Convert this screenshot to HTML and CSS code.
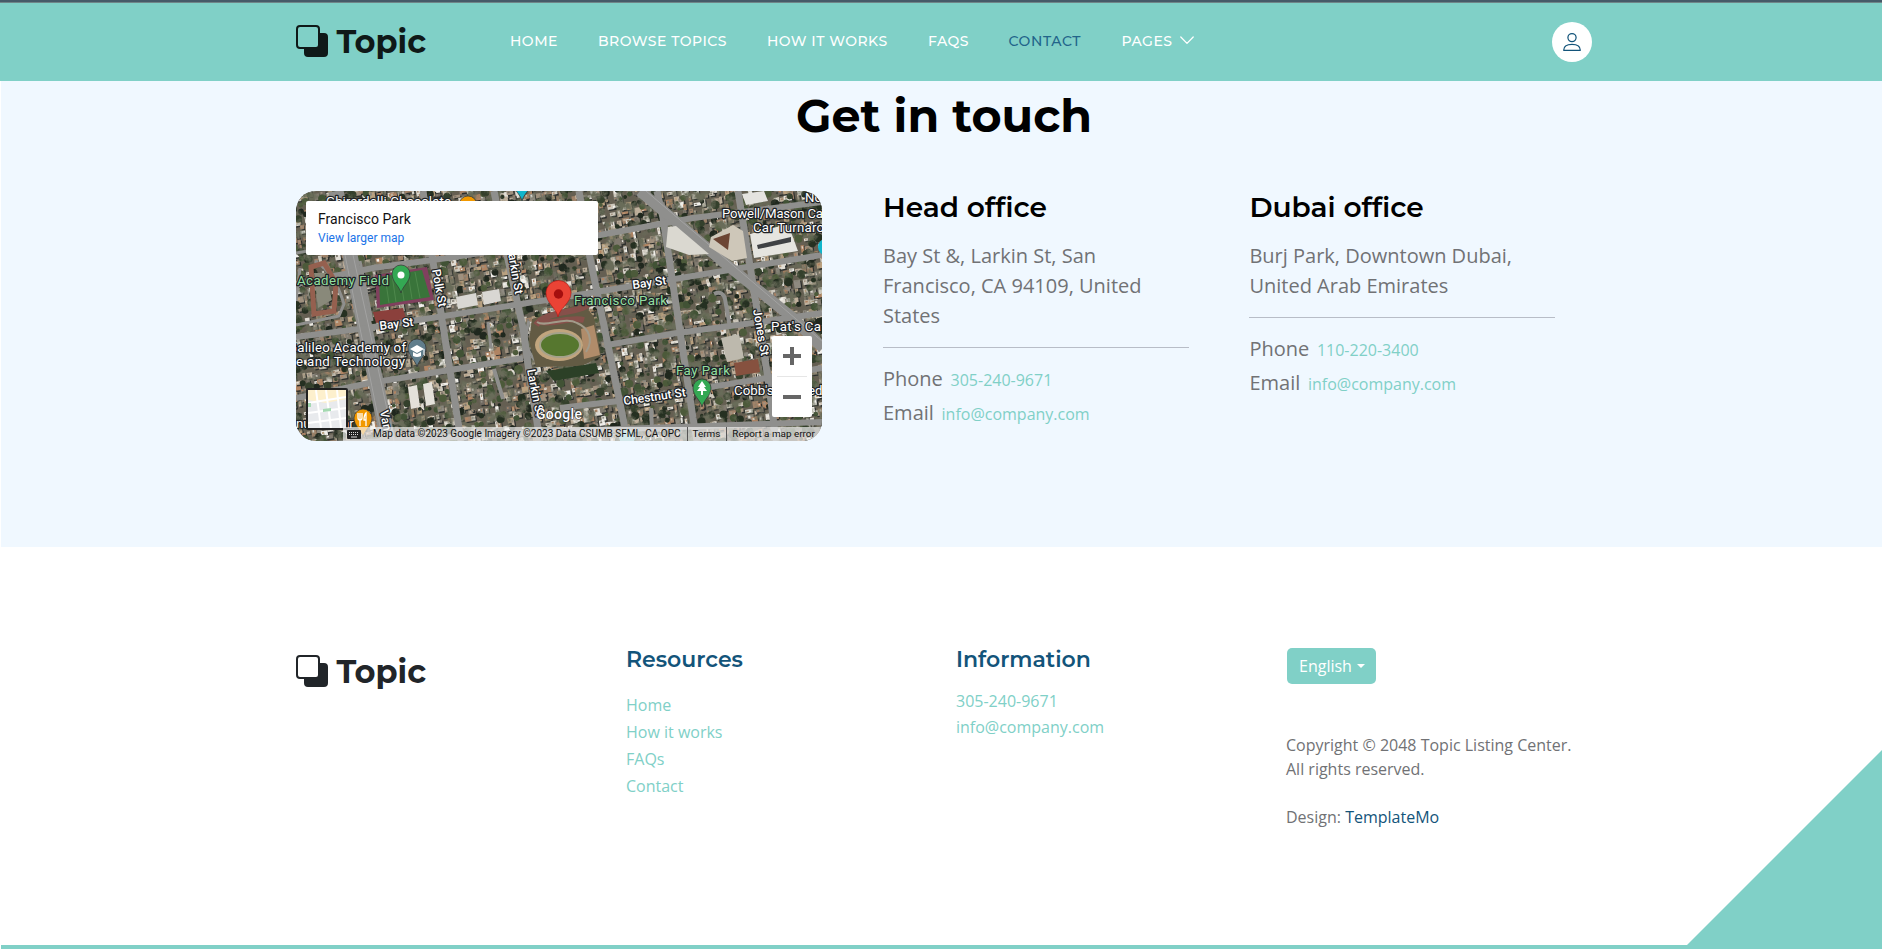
FILE: index.html
```html
<!DOCTYPE html>
<html lang="en">
<head>
<meta charset="utf-8">
<title>Topic Listing Contact Page</title>
<link rel="stylesheet" href="styles.css">
</head>
<body>
<svg width="0" height="0" class="defs">
  <symbol id="back" viewBox="0 0 16 16"><path fill="currentColor" d="M0 2a2 2 0 0 1 2-2h8a2 2 0 0 1 2 2v2h2a2 2 0 0 1 2 2v8a2 2 0 0 1-2 2H6a2 2 0 0 1-2-2v-2H2a2 2 0 0 1-2-2V2zm2-1a1 1 0 0 0-1 1v8a1 1 0 0 0 1 1h8a1 1 0 0 0 1-1V2a1 1 0 0 0-1-1H2z"/></symbol>
</svg>
<header class="navbar">
  <a class="brand"><svg class="brand-icon"><use href="#back"/></svg><span>Topic</span></a>
  <nav class="menu">
    <a class="m-home">Home</a><a class="m-browse">Browse Topics</a><a class="m-how">How it works</a><a class="m-faqs">FAQs</a><a class="m-contact active">Contact</a><a class="m-pages">Pages</a>
    <svg class="chev" viewBox="0 0 14 9"><path d="M.8 1 7 7.4 13.2 1" fill="none" stroke="#fff" stroke-width="1.3" stroke-linecap="round" stroke-linejoin="round"/></svg>
  </nav>
  <a class="user"><svg viewBox="0 0 18 18" fill="none" stroke="#13547a" stroke-width="1.25"><ellipse cx="9" cy="4.6" rx="4.1" ry="4"/><path d="M.7 17.3h16.6c0-3.400-3-5.900-8.300-5.900S.7 13.900.7 17.300z" stroke-linejoin="round"/></svg></a>
</header>
<main class="contact">
  <h2>Get in touch</h2>
  <div class="contact-row">
    <div class="map">
      <svg class="sat" viewBox="0 0 526 250" width="526" height="250">
        <defs>
          <filter id="grain" x="0" y="0" width="100%" height="100%"><feTurbulence type="fractalNoise" baseFrequency=".1" numOctaves="4" seed="8"/><feColorMatrix values="0 0 0 0 .14  0 0 0 0 .15  0 0 0 0 .1  3.4 0 0 0 -1.600"/></filter>
          <g id="pin"><path d="M0 0C-1.500-7-9-11-9-19a9 9 0 0 1 18 0C9-11 1.500-7 0 0z" stroke="#333" stroke-width=".7"/></g>
        </defs>
        <rect width="526" height="250" fill="#655f52"/>
        <g id="blocks"></g>
        <rect width="526" height="250" filter="url(#grain)"/>
        <g fill="none" stroke="#8f8f8d" stroke-width="7" stroke-linejoin="round">
          <path d="M40 0 54 64 92 250" stroke-width="15"/>
          <path d="M127 0 136 64 165 250M198 0 211 64 227 137 232 174 244 250M283 0 294 67 327 227 331 250M361 0 367 27 397 227 401 250M442 0 472 187 480 250"/>
          <path d="M344 0 431 74 497 127 527 157" stroke-width="11"/>
          <path d="M0 146 71 137 264 107 451 76 526 64M0 93 77 77 151 67 304 44 397 27 526 11M311 154 381 142 464 131 526 122M0 207 74 192 227 167M264 217 331 209 471 187 526 177M0 255 264 240 526 231" stroke-width="6"/>
          <path d="M0 62 30 57M19 70C35 80 42 94 48 113L43 125 0 134M4 77 0 110M192 131 195 157M64 70 76 130M233 130C226 153 232 168 250 176" stroke-width="3"/>
          <path d="M418 103c6-3 10 0 11 5l5 29M198 178 207 208M355 217 356 239" stroke-width="4"/>
        </g>
        <g stroke="#aaa" stroke-width=".7"><path d="M49 64 86 245M57 64 98 250M350 0 527 151"/></g>
        <path d="M79 84 131 76 138 109 81 117z" fill="#80405e"/><path d="M83 86 126 79 134 106 84 114z" fill="#39743a"/>
        <path d="m89 85 4 27M96 84l4 27M104 83l4 27M112 82l4 26M119 81l5 26" stroke="#4e884c"/>
        <path d="M77 121 107 117 110 128 80 132z" fill="#8b403c"/>
        <path d="M160 106 180 102 182 114 162 118zM186 101 203 98 205 110 188 114z" fill="#d9d7d3"/>
        <path d="M112 196l9-2 3 22-9 2zM127 193l9-2 3 22-9 2z" fill="#e4e1da"/>
        <path d="M236 128 287 112 298 126 305 165 286 175 240 176 233 150z" fill="#635b44"/>
        <path d="M240 134C250 119 282 123 293 113M241 130c14 5 34-5 47-1" stroke="#86504a" stroke-width="6" fill="none"/>
        <path d="M285 138 298 134 304 164 288 168z" fill="#b08c6a"/>
        <ellipse cx="263" cy="154" rx="24" ry="16" fill="#c1a57e"/><ellipse cx="264" cy="154" rx="20" ry="12" fill="#56772f" stroke="#a4a28b" stroke-width="2"/>
        <path d="M241 131c8 6 28-6 40 1 12 5 17 17 9 29" stroke="#a29b8a" stroke-width="2" fill="none"/>
        <path d="M250 180 300 172 303 182 258 190z" fill="#2c4027"/>
        <path d="M372 36 380 35 413 63 393 64 370 56z" fill="#dad8d0"/><path d="M415 46 437 34 447 40 451 67 436 70 413 56z" fill="#cec7b9"/><path d="m417 48 17-6-2 17z" fill="#6c4534"/>
        <path d="M454 43 492 33 502 60 458 67z" fill="#e5e4df"/><path d="M461 54 495 46v5l-33 7z" fill="#3f4144"/>
        <path d="M446 3l22-3 4 10-22 4z" fill="#e4e3df"/>
        <path d="M425 147l18-4 5 24-17 4z" fill="#bdb9ad"/><path d="M438 172l24-4 2 13-24 4z" fill="#86513f"/>
        <path d="M15 76 28 72 40 92 38 120 18 123z" fill="none" stroke="#95604f" stroke-width="5"/><path d="M18 82h12l6 27-14 8z" fill="#89897a"/>
        <g class="label">
          <text x="30" y="15" textLength="125">Ghirardelli Chocolate</text>
          <text x="509" y="11">No</text>
          <text x="426" y="27" textLength="118">Powell/Mason Cable</text><text x="457" y="41" textLength="94">Car Turnaround</text>
          <text x="475" y="140" textLength="50">Pat's Ca</text>
          <text x="-8" y="161" textLength="118">Galileo Academy of</text><text x="0" y="175" textLength="109">e and Technology</text>
          <text x="0" y="237">nu</text><text x="46" y="237">ar</text>
          <text x="438" y="204">Cobb's</text><text x="512" y="204">ed</text>
          <g class="green"><text x="1" y="94" textLength="92">Academy Field</text><text x="278" y="114" textLength="93">Francisco Park</text><text x="380" y="184" textLength="54">Fay Park</text></g>
          <g class="road"><text transform="translate(84 139) rotate(-7)">Bay St</text><text transform="translate(337 98) rotate(-8)">Bay St</text><text transform="translate(328 214) rotate(-8)">Chestnut St</text><text transform="translate(136 79) rotate(80)">Polk St</text><text transform="translate(211 57) rotate(80)">Larkin St</text><text transform="translate(231 179) rotate(79)">Larkin St</text><text transform="translate(457 119) rotate(80)">Jones St</text><text transform="translate(84 220) rotate(80)">Van</text></g>
          <text x="240" y="228" class="google" textLength="46">Google</text>
        </g>
        <use href="#pin" x="105" y="102" fill="#34a853"/><circle cx="105" cy="84" r="3.500" fill="#fff"/>
        <use href="#pin" x="121" y="176" fill="#607d8b"/><path d="m114 158 7-4 7 4-7 4zm3 3v4q4 2 8 0v-4l-4 2z" fill="#fff"/><path d="M128 158v6" stroke="#fff"/>
        <use href="#pin" x="67" y="246" fill="#f29900"/><path d="M62 222v5q0 2 2 2t2-2v-5m-2 0v13m6 0v-13q-2 2-2 7h2" fill="none" stroke="#fff" stroke-width="1.300"/>
        <use href="#pin" x="406" y="216" fill="#34a853"/><path d="m406 190-4 6h2l-3 4h4v4h2v-4h4l-3-4h2z" fill="#fff"/>
        <use href="#pin" x="226" y="10" fill="#12b5cb"/><use href="#pin" x="172" y="33" fill="#f29900"/><circle cx="530" cy="56" r="8" fill="#12b5cb"/><circle cx="331" cy="246" r="8" fill="#8eccd3"/>
        <path d="M262 126c-1.500-9-12-14-12-24a12.500 12.500 0 0 1 25 0c0 10-11.500 15-13 24z" fill="#ea4335" stroke="#b31412" stroke-width=".6"/><circle cx="262.500" cy="103" r="4.700" fill="#a50e0e"/>
      </svg>
      <div class="map-card"><b>Francisco Park</b><a>View larger map</a></div>
      <svg class="mini" viewBox="0 0 38 38"><rect width="38" height="38" fill="#e8eaed"/><path d="M0 0h38v9L18 13 0 10z" fill="#fdf0cd"/><path d="M0 13 38 7M0 23 38 18M0 33 38 28M8 0l5 38M18 0l5 38M29 0l4 38" stroke="#fff" stroke-width="2"/><path d="m15 19 8-1v3l-8 1zM0 13h3v4H0z" fill="#a4d9b1"/></svg>
      <div class="zoomer"><svg viewBox="0 0 40 81"><path d="M11 20h18M20 11v18M11 61h18" stroke="#666" stroke-width="4"/><path d="M5 40.500h30" stroke="#e6e6e6"/></svg></div>
      <div class="attrib"><svg viewBox="0 0 14 9"><rect width="14" height="9" rx="1" fill="#222"/><path d="M2 2.500h10M2 4.500h10" stroke="#ddd" stroke-dasharray="1 1"/><path d="M4 7h6" stroke="#ddd"/></svg><span class="a-data">Map data ©2023 Google Imagery ©2023 Data CSUMB SFML, CA OPC</span><i></i><span class="a-terms">Terms</span><i></i><span class="a-rep">Report a map error</span></div>
    </div>
    <section class="office head">
      <h4>Head office</h4>
      <p class="address">Bay St &amp;, Larkin St, San Francisco, CA 94109, United States</p>
      <hr>
      <p class="line">Phone <a>305-240-9671</a></p>
      <p class="line">Email <a>info@company.com</a></p>
    </section>
    <section class="office dubai">
      <h4>Dubai office</h4>
      <p class="address">Burj Park, Downtown Dubai, United Arab Emirates</p>
      <hr>
      <p class="line">Phone <a>110-220-3400</a></p>
      <p class="line">Email <a>info@company.com</a></p>
    </section>
  </div>
</main>
<footer class="footer">
  <div class="col"><a class="brand"><svg class="brand-icon"><use href="#back"/></svg><span>Topic</span></a></div>
  <div class="col links"><h6>Resources</h6><a>Home</a><a>How it works</a><a>FAQs</a><a>Contact</a></div>
  <div class="col info"><h6>Information</h6><a>305-240-9671</a><a>info@company.com</a></div>
  <div class="col"><button class="lang">English<span class="caret"></span></button>
    <p class="copy">Copyright © 2048 Topic Listing Center.<br>All rights reserved.<br><br>Design: <a>TemplateMo</a></p></div>
  <svg class="corner" viewBox="0 0 195 195"><path d="M0 195 195 0v195z" fill="#80d0c7"/></svg>
</footer>
<script src="map.js"></script>
</body>
</html>
```
FILE: styles.css
```css
* { box-sizing: border-box; }
body { margin: 0; padding-left: 1px; height: 949px; overflow: hidden; background: #fff; font-family: "Open Sans", sans-serif; font-size: 16px; color: #717275; }
h2, h4, h6, p { margin: 0; }
.defs { display: block; }
.navbar { height: 81px; margin-left: -1px; padding-left: 296px; background: #80d0c7; border-top: 2px solid #465a68; box-shadow: inset 0 1px #708588; display: flex; align-items: flex-start; }
.brand { display: flex; align-items: flex-start; width: 214px; color: #0f1918; font: 700 32px/32px Montserrat, Inter, sans-serif; }
.navbar .brand { margin-top: 23px; }
.brand-icon { width: 32px; height: 32px; margin-right: 8.500px; }
.brand span { padding-top: 1px; }
.menu { display: flex; width: 1042px; padding-top: 29px; font: 500 14px/20px Montserrat, Inter, sans-serif; letter-spacing: .5px; text-transform: uppercase; color: #fff; white-space: nowrap; }
.m-home { width: 88px; } .m-browse { width: 169px; } .m-how { width: 161px; } .m-faqs { width: 80.500px; } .m-contact { width: 113px; } .m-pages { width: 58px; }
.active { color: #22648a; letter-spacing: .6px; }
.chev { width: 14px; height: 9px; margin-top: 5px; }
.user { width: 40px; height: 40px; margin-top: 20px; border-radius: 50%; background: #fff; display: flex; align-items: center; justify-content: center; }
.user svg { width: 18px; height: 18px; overflow: visible; }
.contact { height: 466px; background: #f0f8ff; padding: 0 0 0 295px; }
.contact h2 { width: 1296px; padding-top: 5px; text-align: center; font: 700 46px/60px Montserrat, Inter, sans-serif; color: #000; }
.contact-row { display: flex; margin-top: 45px; }
.map { position: relative; width: 526px; height: 250px; margin-right: 61px; border-radius: 20px; overflow: hidden; font-family: Roboto, sans-serif; }
.sat { display: block; }
.label { font: 13.300px Roboto, sans-serif; fill: #fff; stroke: #202326; stroke-width: 2.500px; paint-order: stroke; stroke-linejoin: round; }
.green { fill: #92dfa0; }
.road { font-size: 12px; font-weight: 500; }
.google { font-size: 14px; font-weight: 500; stroke-width: 1px; }
.map-card { position: absolute; left: 10px; top: 10px; width: 292px; height: 54px; padding: 9px 12px; background: #fff; border-radius: 2px; display: flex; flex-direction: column; font-size: 12px; line-height: 20px; }
.map-card b { font-size: 14px; font-weight: 400; color: #111; line-height: 18px; letter-spacing: .04px; }
.map-card a { color: #1a73e8; }
.mini { position: absolute; left: 10px; top: 197px; width: 42px; height: 42px; border: 2px solid #222; border-radius: 2px; }
.zoomer { position: absolute; left: 476px; top: 145px; width: 40px; height: 81px; background: #fff; border-radius: 2px; }
.zoomer svg { display: block; }
.attrib { position: absolute; left: 47px; top: 236px; width: 479px; height: 14px; padding-left: 4px; background: rgba(245,245,245,.68); display: flex; align-items: center; font-size: 10px; line-height: 12px; color: #111; white-space: nowrap; }
.attrib svg { width: 14px; height: 9px; margin-right: 12px; }
.attrib i { width: 1px; height: 14px; background: #555; margin: 0 5px 0 6px; }
.a-terms, .a-rep { font-size: 9.900px; }
.office { width: 306px; margin-right: 60.400px; }
.office h4 { font: 600 28px/34px Montserrat, Inter, sans-serif; color: #000; margin-top: -1px; }
.address { margin-top: 17px; font-size: 20px; line-height: 30px; width: 290px; }
hr { height: 1px; border: 0; margin: 16px 0; background: #b8bdc7; }
.line { height: 34px; font-size: 20px; line-height: 30px; }
.line a { font-size: 16px; color: #80d0c7; margin-left: 2.500px; }
.footer { position: relative; height: 402px; padding: 101px 0 0 295px; display: flex; border-bottom: 4px solid #80d0c7; }
.col { width: 330px; }
.footer .brand { color: #212529; margin-top: 7px; }
.footer h6 { font: 600 22px/24px Montserrat, Inter, sans-serif; color: #13547a; }
.links a, .info a { display: block; color: #80d0c7; line-height: 27px; }
.links h6 { margin-bottom: 20px; }
.info h6 { margin-bottom: 16px; }
.info a { line-height: 26px; }
.lang { display: flex; align-items: center; width: 89px; height: 36px; margin-left: 1px; border: 0; border-radius: 5px; padding: 0 12px; background: #80d0c7; color: #fff; font: 16px/24px "Open Sans", sans-serif; }
.caret { border: 4px solid transparent; border-top-color: #fff; border-bottom: 0; margin-left: 5px; }
.copy { margin-top: 49px; line-height: 24px; white-space: nowrap; }
.copy a { color: #13547a; }
.corner { position: absolute; right: 0; bottom: 0; width: 195px; height: 195px; }
```
FILE: map.js
```javascript
// Seeded city texture: rooftops, tree crowns and shadows aligned to the streets.
let seed = 91;
const random = () => (seed = (seed * 16807) % 2147483647) / 2147483647;
const roofs = ["#cdc8bc", "#a0917f", "#e2ded6", "#b9a180", "#807a6f", "#8e8a80", "#706a61", "#bfb09c", "#f2f0eb", "#a1836a", "#b08463"];
const trees = ["#253021", "#34402c", "#415235", "#20281e", "#4c5a3a"];
const pick = list => list[Math.floor(random() * list.length)];
let shapes = "";
for (let y = -4; y < 320; y += 7) {
  for (let x = -60; x < 535; x += 5) {
    const w = 2 + random() * 6, h = 2 + random() * 6.5;
    const px = x + y * .18 + random() * 5, py = y - x * .13 + random() * 4;
    const place = `translate(${px.toFixed(1)} ${py.toFixed(1)}) rotate(-9)`;
    if (random() < .3) {
      shapes += `<circle transform="${place}" r="${(1.5 + random() * 3).toFixed(1)}" fill="${pick(trees)}"/>`;
    } else {
      shapes += `<g transform="${place}"><rect x="1.2" y="1.4" width="${w}" height="${h}" fill="#2b2e2c"/><rect width="${w}" height="${h}" fill="${pick(roofs)}"/><rect x="1" y="1" width="${w / 3}" height="${h / 3}" fill="${pick(roofs)}"/></g>`;
    }
  }
}
document.getElementById("blocks").innerHTML = shapes;
```
